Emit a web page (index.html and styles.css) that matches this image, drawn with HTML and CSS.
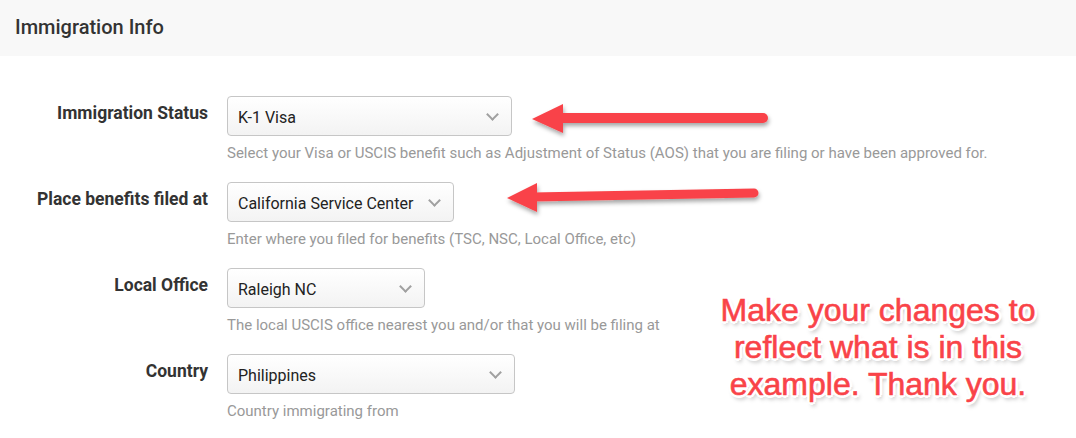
FILE: index.html
```html
<!DOCTYPE html>
<html>
  <head>
    <meta charset="UTF-8" />
    <title>Immigration Info</title>
    <link rel="stylesheet" href="styles.css">
  </head>
  <body>
    <div class="panel-heading">Immigration Info</div>
    <form class="form-horizontal">
      <div class="form-row">
        <label class="form-label">Immigration Status</label>
        <div class="form-field">
          <div class="select-box w-284"><span>K-1 Visa</span><i class="caret"></i></div>
          <p class="help-text">Select your Visa or USCIS benefit such as Adjustment of Status (AOS) that you are filing or have been approved for.</p>
        </div>
      </div>
      <div class="form-row">
        <label class="form-label">Place benefits filed at</label>
        <div class="form-field">
          <div class="select-box w-226"><span>California Service Center</span><i class="caret"></i></div>
          <p class="help-text">Enter where you filed for benefits (TSC, NSC, Local Office, etc)</p>
        </div>
      </div>
      <div class="form-row">
        <label class="form-label">Local Office</label>
        <div class="form-field">
          <div class="select-box w-197"><span>Raleigh NC</span><i class="caret"></i></div>
          <p class="help-text">The local USCIS office nearest you and/or that you will be filing at</p>
        </div>
      </div>
      <div class="form-row">
        <label class="form-label">Country</label>
        <div class="form-field">
          <div class="select-box w-287"><span>Philippines</span><i class="caret"></i></div>
          <p class="help-text">Country immigrating from</p>
        </div>
      </div>
    </form>

    <!-- annotation layer drawn on top of the screenshot -->
    <svg class="arrows" width="1076" height="438" viewBox="0 0 1076 438">
      <defs>
        <filter id="shadow" x="-10%" y="-50%" width="120%" height="200%">
          <feDropShadow dx="1" dy="3" stdDeviation="2" flood-color="#000" flood-opacity="0.35" />
        </filter>
      </defs>
      <g filter="url(#shadow)" fill="#f94348" stroke="#f94348">
        <line x1="556" y1="118" x2="763" y2="118" stroke-width="10" stroke-linecap="round" />
        <polygon points="532,119 563,104 563,133" stroke="none" />
        <line x1="532" y1="197" x2="754" y2="193" stroke-width="9" stroke-linecap="round" />
        <polygon points="507,198 537,183 537,212" stroke="none" />
      </g>
    </svg>
    <div class="note">Make your changes to<br>reflect what is in this<br>example. Thank you.</div>
  </body>
</html>
```

FILE: styles.css
```css
body {
  margin: 0;
  font-family: Roboto, "Liberation Sans", sans-serif;
  color: #333;
  background: #fff;
  position: relative;
  width: 1076px;
  height: 438px;
  overflow: hidden;
}

.panel-heading {
  background-color: #f8f8f8;
  height: 56px;
  line-height: 55px;
  padding-left: 15px;
  font-size: 20px;
  font-weight: 500;
  color: #333;
}

.form-horizontal {
  padding-top: 40px;
}

.form-row {
  display: flex;
  height: 86px;
}

.form-label {
  width: 208px;
  margin-right: 19px;
  text-align: right;
  font-size: 17.5px;
  font-weight: 700;
  padding-top: 7px;
  color: #333;
}

.form-field {
  flex: 1;
}

.select-box {
  box-sizing: border-box;
  height: 40px;
  border: 1px solid #c6c6c6;
  border-radius: 4px;
  background: linear-gradient(#ffffff, #f3f3f3);
  display: flex;
  align-items: center;
  justify-content: space-between;
  padding: 2px 14px 0 10px;
  font-size: 16px;
  color: #222;
}

.w-284 { width: 285px; }
.w-226 { width: 227px; }
.w-197 { width: 198px; }
.w-287 { width: 288px; }

.caret {
  width: 7px;
  height: 7px;
  border-right: 2.5px solid #a0a0a0;
  border-bottom: 2.5px solid #a0a0a0;
  transform: rotate(45deg);
  margin-top: -5px;
}

.help-text {
  margin: 7px 0 0;
  font-size: 15px;
  line-height: 20px;
  color: #999;
}

.arrows {
  position: absolute;
  left: 0;
  top: 0;
  pointer-events: none;
}

.note {
  position: absolute;
  left: 700px;
  top: 292px;
  width: 356px;
  text-align: center;
  font-family: "Liberation Sans", Arial, sans-serif;
  font-size: 32px;
  line-height: 37px;
  color: #f94348;
  -webkit-text-stroke: 0.6px #f94348;
  text-shadow:
    -3px 0 0 #fff, 3px 0 0 #fff, 0 -3px 0 #fff, 0 3px 0 #fff,
    -2px -2px 0 #fff, 2px 2px 0 #fff, -2px 2px 0 #fff, 2px -2px 0 #fff,
    2px 4px 4px rgba(0, 0, 0, 0.35);
}
```
